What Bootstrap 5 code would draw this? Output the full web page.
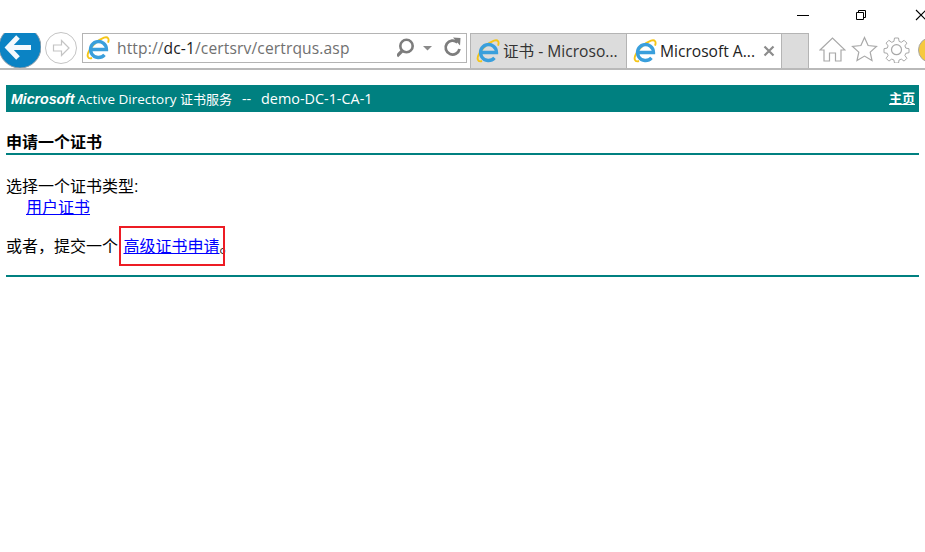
<!DOCTYPE html>
<html lang="zh">
<head>
<meta charset="utf-8">
<title>Microsoft Active Directory 证书服务</title>
<link rel="stylesheet" href="https://cdn.jsdelivr.net/npm/bootstrap@5.3.0/dist/css/bootstrap.min.css">
<style>
html,body{margin:0;background:#fff;overflow:hidden}
body{font-family:"Liberation Sans","Noto Sans CJK SC",sans-serif;font-size:16px;color:#000;height:552px}
.ie-chrome{height:70px;border-bottom:2px solid #b9b9b9;overflow:hidden;font-family:"Open Sans","Noto Sans CJK SC",sans-serif}
.win-row{height:33px;padding-top:9px}
.win-btn{width:12px;height:12px;display:block;flex:0 0 12px}
.win-min{margin-right:46px}
.win-res{margin-right:48px}
.win-close{margin-right:-2px}
.tool-row{height:35px}
.back-ic{flex:0 0 41px;width:41px;height:35px;display:block}
.fwd-ic{flex:0 0 32px;width:32px;height:32px;margin:-1px 0 0 4px;display:block}
.addr{width:385px;height:30px;margin-left:5px;border:1px solid #b4b4b4;padding-left:3px}
.addr-url{font-size:15.6px;color:#707070;margin-left:7px;letter-spacing:.12px;white-space:nowrap;line-height:30px}
.addr-url b{font-weight:400;color:#1a1a1a}
.ie-logo{width:24px;height:24px;flex:0 0 24px;display:block}
.addr-tools{margin-left:auto;margin-right:1px}
.tab-strip{margin-left:3px;height:35px}
.ie-tab{height:35px;border:1px solid #b4b4b4;border-bottom:0;white-space:nowrap;font-size:15.6px;padding-left:5px;color:#333}
.tab-a{width:157px;background:#dcdcdc}
.tab-b{width:155px;background:#fff;border-left:0;color:#222;padding-left:6px}
.tab-c{width:27px;background:#dcdcdc;border-left:0}
.tab-txt{margin-left:3px;line-height:33px}
.tab-x{margin-left:8px;width:12px;height:12px;display:block}
.right-tools{margin-left:10px;margin-top:3px;gap:5px}
.rt-ic{width:27px;height:27px;display:block;flex:0 0 27px}
.page-wrap{padding:15px 6px 0 6px;line-height:20px}
.cs-bar{background:#008080;color:#fff;height:27px;padding:0 4px 0 5px;font-size:13px;line-height:28px}
.cs-ms{font-weight:700;font-style:italic;font-size:14.3px;letter-spacing:-.1px}
.cs-bar .cs-sub{font-family:"Open Sans","Noto Sans CJK SC",sans-serif;font-size:13.5px;margin-left:3px;white-space:pre}
.cs-zh{font-size:13px}
.cs-host{font-size:14.4px;word-spacing:1.2px}
.cs-home{color:#fff;font-weight:700;font-size:13px}
.cs-title{font-size:16px;font-weight:700;margin:21px 0 0;line-height:20px}
.cs-rule{height:2px;background:#008080;margin:0;border:0;opacity:1}
.cs-line{margin:0;line-height:21px}
.cs-first{margin-top:21px}
.cs-ind{padding-left:20px}
.cs-adv{margin-top:18px;height:21px}
.cs-rule-b{margin-top:18px}
.cs-comma{font-family:"Liberation Sans","Noto Sans CJK TC",sans-serif}
a.cs-link{color:#00f;text-decoration:underline}
.mark-wrap{position:relative;display:inline-block;margin-left:1px}
.red-box{position:absolute;left:-4px;width:106px;top:-10px;bottom:-9px;border:2px solid #ed1c24;pointer-events:none}
</style>
</head>
<body>
<svg width="0" height="0" class="d-block position-absolute">
  <defs>
    <symbol id="ie" viewBox="0 0 24 24">
      <path d="M6 22C1.500 23.500.5 19.500 3 15 6 9 13 3.500 18 1.700c4-1.300 5.500 1 4 5" fill="none" stroke="#f5c518" stroke-width="1.900"/>
      <path d="M5.500 13.500H20.500A8 8 0 1 0 18.500 18.800" fill="none" stroke="#3a9fdc" stroke-width="3.300"/>
    </symbol>
  </defs>
</svg>
<header class="ie-chrome">
  <div class="win-row d-flex justify-content-end align-items-start">
    <svg class="win-btn win-min" viewBox="0 0 12 12"><path d="M0 6.500h12" stroke="#000" stroke-width="1"/></svg>
    <svg class="win-btn win-res" viewBox="0 0 12 12"><path d="M1.500 3.500h7v7h-7zM3.500 3.500v-2h7v7h-2" fill="none" stroke="#000" stroke-width="1"/></svg>
    <svg class="win-btn win-close" viewBox="0 0 12 12"><path d="M1 1l10 10M11 1L1 11" stroke="#000" stroke-width="1.100"/></svg>
  </div>
  <div class="tool-row d-flex align-items-start">
    <svg class="back-ic" viewBox="0 0 41 35">
      <circle cx="20" cy="14" r="21" fill="#0b83c4" stroke="#8e9da8" stroke-width="1"/>
      <path d="M18 4L8 14.500 18 25M9 14.500H31" fill="none" stroke="#f4f9fd" stroke-width="5"/>
    </svg>
    <svg class="fwd-ic" viewBox="0 0 32 32">
      <circle cx="16" cy="16" r="15.500" fill="#fff" stroke="#c4c4c4"/>
      <path d="M16.500 8.500L24 16l-7.500 7.500v-4.500H8.500v-6h8z" fill="#fff" stroke="#c4c4c4" stroke-width="1.200"/>
    </svg>
    <div class="addr d-flex align-items-center flex-shrink-0">
      <svg class="ie-logo"><use href="#ie"/></svg>
      <span class="addr-url">http://<b>dc-1</b>/certsrv/certrqus.asp</span>
      <svg class="addr-tools" width="68" height="22" viewBox="0 0 68 22">
        <circle cx="9.500" cy="9" r="6.200" fill="none" stroke="#7d7d7d" stroke-width="2.600"/>
        <path d="M5.500 13.500L0 19" stroke="#7d7d7d" stroke-width="3.200"/>
        <path d="M26 9h9l-4.500 4.500z" fill="#8a8a8a"/>
        <path d="M60.500 5.500A7 7 0 1 0 62.500 12" fill="none" stroke="#7d7d7d" stroke-width="2.800"/>
        <path d="M56 .5l7.500.5-.5 7.500z" fill="#7d7d7d"/>
      </svg>
    </div>
    <div class="tab-strip d-flex flex-shrink-0">
      <div class="ie-tab tab-a d-flex align-items-center">
        <svg class="ie-logo"><use href="#ie"/></svg>
        <span class="tab-txt">证书 - Microso...</span>
      </div>
      <div class="ie-tab tab-b d-flex align-items-center">
        <svg class="ie-logo"><use href="#ie"/></svg>
        <span class="tab-txt">Microsoft A...</span>
        <svg class="tab-x" viewBox="0 0 12 12"><path d="M1.500 1.500l9 9M10.500 1.500l-9 9" stroke="#8c8c8c" stroke-width="2.200"/></svg>
      </div>
      <div class="ie-tab tab-c"></div>
    </div>
    <div class="right-tools d-flex align-items-start flex-shrink-0">
      <svg class="rt-ic" viewBox="0 0 27 27"><path d="M1 14L13.500 2 26 14h-4v11h-5.500v-8h-6v8H5V14z" fill="#fff" stroke="#a8a8a8" stroke-width="1.200"/></svg>
      <svg class="rt-ic" viewBox="0 0 27 27"><path d="M13.500 1.500l3.600 8 8.400.9-6.300 5.700 1.800 8.400-7.500-4.400L6 24.500l1.800-8.400-6.300-5.700 8.400-.9z" fill="#fff" stroke="#a8a8a8" stroke-width="1.200"/></svg>
      <svg class="rt-ic" viewBox="0 0 27 27"><path d="M11.500 2h4l.6 3.400 2.200.9 2.800-2 2.800 2.800-2 2.800.9 2.200 3.200.6v4l-3.200.6-.9 2.200 2 2.800-2.800 2.800-2.800-2-2.200.9-.6 3h-4l-.6-3-2.200-.9-2.800 2-2.800-2.800 2-2.800-.9-2.200-3.200-.6v-4l3.200-.6.900-2.200-2-2.800 2.800-2.800 2.800 2 2.200-.9z" fill="#fff" stroke="#a8a8a8" stroke-width="1"/><circle cx="13.500" cy="13.700" r="5" fill="#fff" stroke="#a8a8a8" stroke-width="1.200"/></svg>
      <svg class="rt-ic" viewBox="0 0 27 27"><circle cx="16" cy="14" r="12.500" fill="#f6c93f" stroke="#a8a8a8"/></svg>
    </div>
  </div>
</header>
<main class="page-wrap">
  <div class="cs-bar d-flex justify-content-between">
    <div><span class="cs-ms">Microsoft</span><span class="cs-sub">Active Directory <span class="cs-zh">证书服务</span><span class="cs-host">  --  demo-DC-1-CA-1</span></span></div>
    <a class="cs-home" href="#">主页</a>
  </div>
  <h1 class="cs-title">申请一个证书</h1>
  <hr class="cs-rule">
  <p class="cs-line cs-first">选择一个证书类型:</p>
  <p class="cs-line cs-ind"><a class="cs-link" href="#">用户证书</a></p>
  <p class="cs-line cs-adv">或者<span class="cs-comma">，</span>提交一个 <span class="mark-wrap"><a class="cs-link" href="#">高级证书申请</a>。<span class="red-box"></span></span></p>
  <hr class="cs-rule cs-rule-b">
</main>
<script src="https://cdn.jsdelivr.net/npm/bootstrap@5.3.0/dist/js/bootstrap.bundle.min.js"></script>
</body>
</html>
